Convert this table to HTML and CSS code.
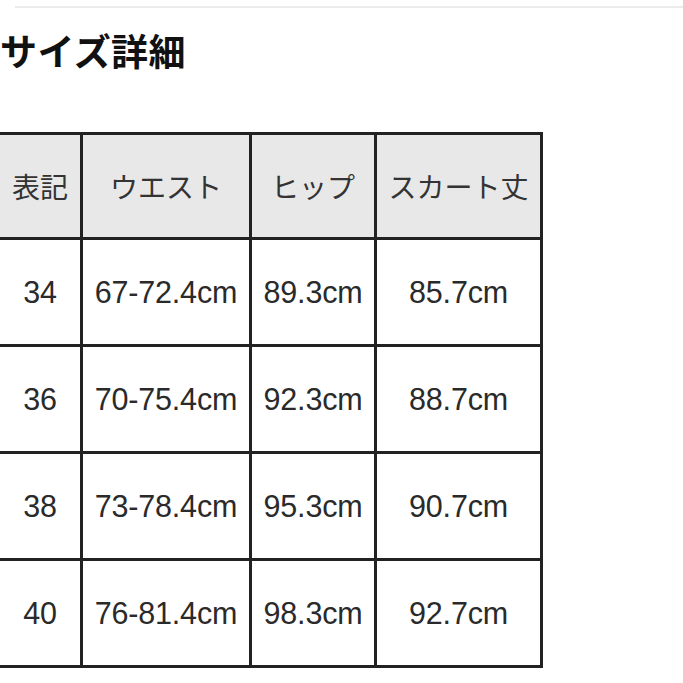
FILE: index.html
```html
<!DOCTYPE html>
<html lang="ja">
<head>
<meta charset="utf-8">
<title>サイズ詳細</title>
<link rel="stylesheet" href="styles.css">
</head>
<body>
<div class="topline"></div>
<h1 class="title">サイズ詳細</h1>
<table class="size-table">
  <thead>
    <tr>
      <th class="c1">表記</th>
      <th class="c2">ウエスト</th>
      <th class="c3">ヒップ</th>
      <th class="c4">スカート丈</th>
    </tr>
  </thead>
  <tbody>
    <tr><td class="c1">34</td><td class="c2">67-72.4cm</td><td class="c3">89.3cm</td><td class="c4">85.7cm</td></tr>
    <tr><td class="c1">36</td><td class="c2">70-75.4cm</td><td class="c3">92.3cm</td><td class="c4">88.7cm</td></tr>
    <tr><td class="c1">38</td><td class="c2">73-78.4cm</td><td class="c3">95.3cm</td><td class="c4">90.7cm</td></tr>
    <tr><td class="c1">40</td><td class="c2">76-81.4cm</td><td class="c3">98.3cm</td><td class="c4">92.7cm</td></tr>
  </tbody>
</table>
</body>
</html>
```
FILE: styles.css
```css
html, body {
  margin: 0;
  padding: 0;
  background: #ffffff;
}
body {
  font-family: "Liberation Sans", "Noto Sans CJK JP", sans-serif;
  color: #2a2a2a;
}
.topline {
  height: 2px;
  margin: 6px 0 0 15px;
  background: #ebebeb;
}
.title {
  margin: 16px 0 0 0;
  font-family: "Noto Sans CJK JP", sans-serif;
  font-weight: 700;
  font-size: 37px;
  line-height: 52px;
  color: #111;
  letter-spacing: 0.4px;
}
.size-table {
  margin-top: 56px;
  border-collapse: collapse;
  table-layout: fixed;
}
.size-table th,
.size-table td {
  border: 3px solid #222;
  text-align: center;
  vertical-align: middle;
  padding: 0;
}
.size-table th {
  background: #e8e8e8;
  font-family: "Noto Sans CJK JP", sans-serif;
  font-weight: 400;
  font-size: 28px;
  color: #333;
  height: 102px;
}
.size-table td {
  font-family: "Liberation Sans", sans-serif;
  font-size: 30.5px;
  letter-spacing: -0.2px;
  color: #2a2a2a;
  height: 104px;
}
.size-table .c1 { width: 80px; border-left: none; }
.size-table .c2 { width: 166px; }
.size-table .c3 { width: 122px; }
.size-table .c4 { width: 163px; }
```
